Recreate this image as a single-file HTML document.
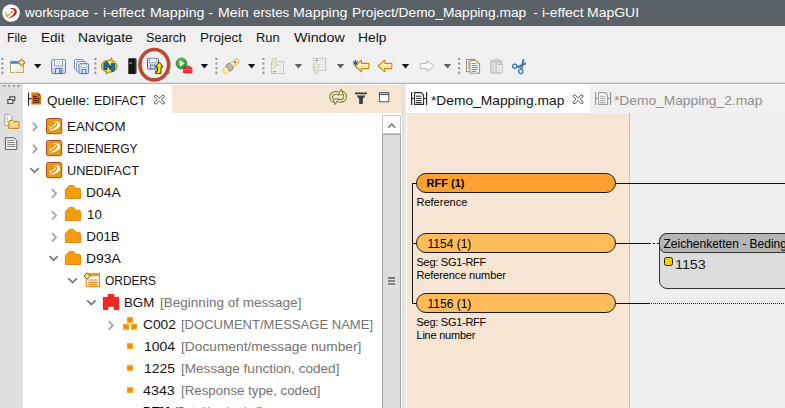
<!DOCTYPE html>
<html lang="de"><head><meta charset="utf-8"><title>i-effect MapGUI</title>
<style>
html,body{margin:0;padding:0;background:#f0f0f0;overflow:hidden;}
#app{position:relative;width:785px;height:408px;overflow:hidden;background:#f0f0f0;font-family:"Liberation Sans",sans-serif;}
#app div,#app svg,#app span{position:absolute;}
.t{white-space:nowrap;line-height:1;transform-origin:0 0;display:block;margin-left:-0.6px;}
.a{white-space:nowrap;line-height:1;display:block;color:#000;}
#title{left:0;top:0;width:785px;height:25.5px;background:#5a6268;}
#tbline{left:0;top:82px;width:785px;height:2px;background:linear-gradient(#dedede 0 50%,#b6b6b6 50% 100%);}
#side{left:0;top:84px;width:23px;height:324px;background:#e0e0e0;}
#ltabbar{left:23px;top:85px;width:378.6px;height:28px;background:#f5e5d2;border-top-right-radius:4px;}
#ltab{left:23px;top:84px;width:149px;height:29px;background:#fff;border-top-right-radius:5px;}
#tree{left:23px;top:113px;width:359px;height:295px;background:#fff;}
#sbar{left:382px;top:113px;width:20.4px;height:295px;background:#fff;}
#sbup{left:382px;top:115px;width:16.6px;height:17px;background:#fff;border:1px solid #c9c9c9;}
#sbthumb{left:382px;top:134px;width:16.6px;height:280px;background:#dddddd;border:1px solid #a3a3a3;}
#sash{left:402.4px;top:84px;width:3.6px;height:324px;background:linear-gradient(90deg,#dcdcdc,#ebebeb);}
#etab{left:406px;top:84px;width:184px;height:29px;background:#fff;border-top-right-radius:5px;}
#eleft{left:406px;top:113px;width:1px;height:295px;background:#fff;}
#epeach{left:407px;top:113px;width:222px;height:295px;background:#f5e5d2;border-right:1px solid #c6c0b8;}
#eright{left:630px;top:113px;width:155px;height:295px;background:#eeeeee;}
.pill{height:18px;width:198px;border:1px solid #1c1c1c;border-radius:10px;}
.ln{background:#111;}
#wl1{left:23px;top:84px;width:377px;height:1px;background:#fff;}
#wl2{left:406px;top:84px;width:379px;height:1px;background:#fdfdfd;}

</style></head><body>
<div id="app">
<div id="title"></div>
<svg style="left:0;top:0" width="24" height="26" viewBox="0 0 24 26">
 <circle cx="11.05" cy="13.05" r="8.8" fill="#fff"/>
 <path d="M9.4 8.7 C13 7.3 16.8 8.5 16.8 11.7 C16.8 15.1 12 18.1 7.6 18.5 C11.6 16.7 14.5 14 14.5 11.5 C14.5 9.5 12.4 8.7 9.4 8.7Z" fill="#b81e12"/>
 <path d="M5 12.1 L6.4 12.7 L7.3 15.5 L11.3 11.9 L10.3 11.1 L13 10.9 L12.7 13.5 L12 12.6 L6.6 17.8 Z" fill="#f0900c"/>
</svg>
<div id="tbline"></div>
<div id="side"></div>
<div id="wl1"></div><div id="wl2"></div>
<div id="ltabbar"></div>
<div id="ltab"></div>
<div id="tree"></div>
<div id="sbar"></div>
<div id="sbup"></div>
<div id="sbthumb"></div>
<div id="sash"></div>
<div id="etab"></div>
<div id="eleft"></div>
<div id="epeach"></div>
<div id="eright"></div>
<!-- editor diagram -->
<div class="ln" style="left:412px;top:183px;width:1px;height:121px"></div>
<div class="ln" style="left:412px;top:183px;width:5px;height:1px"></div>
<div class="ln" style="left:412px;top:243px;width:5px;height:1px"></div>
<div class="ln" style="left:412px;top:303px;width:5px;height:1px"></div>
<div class="pill" style="left:416px;top:173px;background:#ffa030"></div>
<div class="pill" style="left:416px;top:233px;background:#ffbc58"></div>
<div class="pill" style="left:416px;top:293px;background:#ffbc58"></div>
<span class="a" style="left:426.6px;top:178.3px;font-size:11px;font-weight:bold">RFF (1)</span>
<span class="a" style="left:427.5px;top:238px;font-size:12px">1154 (1)</span>
<span class="a" style="left:427.5px;top:298px;font-size:12px">1156 (1)</span>
<span class="a" style="left:416.5px;top:196.6px;font-size:11px">Reference</span>
<span class="a" style="left:416.5px;top:256.6px;font-size:11px;letter-spacing:-0.27px">Seg: SG1-RFF</span>
<span class="a" style="left:416.5px;top:269.8px;font-size:11px;letter-spacing:-0.12px">Reference number</span>
<span class="a" style="left:416.5px;top:316.8px;font-size:11px;letter-spacing:-0.27px">Seg: SG1-RFF</span>
<span class="a" style="left:416.5px;top:329.9px;font-size:11px;letter-spacing:-0.23px">Line number</span>
<div class="ln" style="left:616px;top:183px;width:169px;height:1px"></div>
<div class="ln" style="left:616px;top:243px;width:33px;height:1px"></div>
<div style="left:649px;top:243px;width:11px;height:1px;background:repeating-linear-gradient(90deg,#111 0 2px,transparent 2px 4px)"></div>
<div class="ln" style="left:616px;top:303px;width:33px;height:1px"></div>
<div style="left:649px;top:303px;width:136px;height:1px;background:repeating-linear-gradient(90deg,#222 0 1px,transparent 1px 2px)"></div>
<div style="left:659px;top:233px;width:140px;height:54px;background:#dcdcdc;border:1px solid #333;border-radius:8px;"></div>
<div style="left:659px;top:233px;width:140px;height:18.4px;background:#b4b4b4;border:1px solid #333;border-radius:8px 8px 0 7px;"></div>
<span class="a" style="left:663.5px;top:238.1px;font-size:12px">Zeichenketten - Bedingung</span>
<div style="left:664.2px;top:257px;width:7px;height:7.4px;background:#ffcc00;border:1px solid #2a2200;border-radius:2.5px"></div>
<!-- scrollbar glyphs -->
<svg style="left:382px;top:115px" width="20" height="20" viewBox="0 0 20 20"><path d="M6.2 12.6 L9.7 9 L13.2 12.6" fill="none" stroke="#555" stroke-width="1.2"/></svg>
<svg style="left:386px;top:275px" width="12" height="12" viewBox="386 275 12 12"><path d="M388 277.9h7M388 281h7M388 284h7" stroke="#6a6a6a" stroke-width="1.7"/></svg>

<svg id="icons" style="left:0;top:0" width="785" height="408" viewBox="0 0 785 408">
<defs>
 <linearGradient id="gSave" x1="0" y1="0" x2="0" y2="1"><stop offset="0" stop-color="#f4f6fa"/><stop offset="1" stop-color="#c3d0e8"/></linearGradient>
 <linearGradient id="gArr" x1="0" y1="0" x2="0" y2="1"><stop offset="0" stop-color="#fffbe0"/><stop offset="1" stop-color="#ffd970"/></linearGradient>
 <linearGradient id="gBeige" x1="0" y1="0" x2="1" y2="0"><stop offset="0" stop-color="#f4f1e8"/><stop offset="1" stop-color="#dcd7c8"/></linearGradient>
 <radialGradient id="gGreen" cx="0.4" cy="0.35" r="0.7"><stop offset="0" stop-color="#6cc86c"/><stop offset="1" stop-color="#1f8a2a"/></radialGradient>
        </defs>
<!-- toolbar separators -->
<g transform="translate(1.4 58)"><rect x="0" y="0" width="2" height="2" fill="#979080"/><rect x="0" y="4.6" width="2" height="2" fill="#979080"/><rect x="0" y="9.2" width="2" height="2" fill="#979080"/><rect x="0" y="13.6" width="2" height="2.6" fill="#a39b88"/></g><g transform="translate(94.4 58)"><rect x="0" y="0" width="2" height="2" fill="#979080"/><rect x="0" y="4.6" width="2" height="2" fill="#979080"/><rect x="0" y="9.2" width="2" height="2" fill="#979080"/><rect x="0" y="13.6" width="2" height="2.6" fill="#a39b88"/></g><g transform="translate(215.4 58)"><rect x="0" y="0" width="2" height="2" fill="#979080"/><rect x="0" y="4.6" width="2" height="2" fill="#979080"/><rect x="0" y="9.2" width="2" height="2" fill="#979080"/><rect x="0" y="13.6" width="2" height="2.6" fill="#a39b88"/></g><g transform="translate(262.4 58)"><rect x="0" y="0" width="2" height="2" fill="#979080"/><rect x="0" y="4.6" width="2" height="2" fill="#979080"/><rect x="0" y="9.2" width="2" height="2" fill="#979080"/><rect x="0" y="13.6" width="2" height="2.6" fill="#a39b88"/></g><g transform="translate(458.2 58)"><rect x="0" y="0" width="2" height="2" fill="#979080"/><rect x="0" y="4.6" width="2" height="2" fill="#979080"/><rect x="0" y="9.2" width="2" height="2" fill="#979080"/><rect x="0" y="13.6" width="2" height="2.6" fill="#a39b88"/></g>
<!-- new -->
<rect x="10.5" y="61.5" width="13" height="11" fill="#f2faff" stroke="#b9a468" stroke-width="1"/>
<rect x="10.6" y="61.2" width="9" height="2.6" fill="#3b8bd4"/>
<path d="M13.5 72 C18.5 72 21.5 69.5 22.5 65.5" fill="none" stroke="#f8e6a8" stroke-width="1.4"/>
<path d="M21.6 59.4L24.6 62.5L21.6 65.6L18.6 62.5Z" fill="#fffdf0" stroke="#bf9a34" stroke-width="1.9" stroke-linejoin="round"/>
<path d="M21.6 60.6v3.8M19.7 62.5h3.8" stroke="#fff" stroke-width="1.2"/>
<g transform="translate(34 63.9)" fill="#111"><path d="M0 0h7.4l-3.7 4.5z"/></g>
<!-- save -->
<g id="save1"><rect x="51.6" y="59.5" width="14" height="14" rx="1.6" fill="url(#gSave)" stroke="#6f86b4" stroke-width="1"/>
<rect x="54.6" y="59.6" width="8" height="6.2" fill="#f8f9f6" stroke="#8c99ab" stroke-width=".8"/><path d="M56 61.8h5.2M56 63.6h5.2" stroke="#cfd4da" stroke-width=".7"/>
<rect x="55.6" y="68.6" width="6.2" height="5" fill="#dfe9fa" stroke="#4c6eaf" stroke-width="1"/><rect x="59.2" y="69.6" width="1.3" height="3.4" fill="#39558f"/></g>
<!-- save all -->
<rect x="74.4" y="59.5" width="9" height="10" rx="1.2" fill="#eef2fa" stroke="#7a8fb8" stroke-width="1"/>
<rect x="76.6" y="61.5" width="9.4" height="10.4" rx="1.2" fill="#eef2fa" stroke="#7a8fb8" stroke-width="1"/>
<rect x="79" y="63.6" width="9.6" height="10" rx="1.2" fill="url(#gSave)" stroke="#5d7db6" stroke-width="1"/>
<rect x="81" y="64" width="5.6" height="3.6" fill="#f4f6f6" stroke="#94a1b5" stroke-width=".7"/>
<rect x="82" y="69.6" width="3.8" height="4" fill="#dfe9fa" stroke="#4c6eaf" stroke-width=".9"/>
<!-- sync -->
<path d="M101.6 66.6C101.2 63 103.8 60.6 107.6 60.4L110.2 60.2L111.6 57.8L112.2 60.8C115 61.6 117 63.6 117 66.4C117 69.4 114.8 71.6 111.6 72L108.4 72.2L106.4 74.2L106.6 71.8C103.8 71.2 101.9 69.4 101.6 66.6Z" fill="#ffe232" stroke="#857a1a" stroke-width="1"/>
<path d="M103.9 69.2V63.4L106.6 61.4L111.7 67.6V63.2L114.7 63.8V69.6L112 71.6L106.9 65.4V69.8Z" fill="#1a74c6" stroke="#15150c" stroke-width=".7" stroke-linejoin="round"/>
<!-- server -->
<path d="M128.3 59.2C128.3 58.6 128.8 58.3 129.4 58.3H135.2C136 58.3 136.5 58.8 136.5 59.6V72.6C136.5 73.4 136 73.9 135.2 73.9H128.3Z" fill="#141414"/>
<rect x="134.4" y="59" width="1.6" height="14" fill="#3a3a3a" opacity=".7"/>
<rect x="129.2" y="62.6" width="2.8" height="1.3" fill="#21d23a"/>
<!-- highlight ellipse -->
<ellipse cx="154.3" cy="64.7" rx="14.4" ry="15.2" fill="none" stroke="#bd4a31" stroke-width="3.7"/>
<!-- save as / upload -->
<rect x="147.5" y="58.4" width="11" height="10.6" rx="1" fill="#dbe2ec" stroke="#586070" stroke-width="1"/>
<rect x="149.6" y="58.6" width="6.6" height="4.2" fill="#f1f3f4" stroke="#8a93a0" stroke-width=".7"/>
<rect x="150.4" y="65" width="4.6" height="4" fill="#c9d8f2" stroke="#4f68a0" stroke-width=".8"/>
<path d="M159.2 62L163 66.8H161V73.4H155.6V71.2H157.6V66.8H155.4Z" fill="#fff000" stroke="#15150a" stroke-width=".9" stroke-linejoin="round"/>
<rect x="168.4" y="72.2" width="1.2" height="2" fill="#6a6a60"/>
<!-- run -->
<circle cx="181.5" cy="63.5" r="5.5" fill="url(#gGreen)" stroke="#2b8a35" stroke-width=".6"/>
<path d="M179.8 60.6L184.6 63.5L179.8 66.4Z" fill="#fff"/>
<path d="M185.6 67.2V66.2H189.6V67.2" fill="none" stroke="#e01818" stroke-width="1.1"/>
<rect x="183" y="67.2" width="9.4" height="6" rx=".8" fill="#e31b1b"/>
<path d="M183.4 69.6h8.6" stroke="#ffb8b8" stroke-width=".7"/><path d="M183.4 71.6h8.6" stroke="#f06060" stroke-width=".6"/>
<g transform="translate(200.7 63.9)" fill="#111"><path d="M0 0h7.4l-3.7 4.5z"/></g>
<!-- flashlight -->
<g transform="translate(231 65.9) rotate(-40.5) scale(0.89 1)">
 <path d="M-10.8 -2.2L-4.6 -3V3L-10.8 2.2Z" fill="#fffbe2" stroke="#f0a52a" stroke-width=".9"/>
 <path d="M-10.6 -1.9L-7.6 -2.3V2.3L-10.6 1.9Z" fill="#fff36a"/>
 <path d="M-4.8 -3.2L-1.6 -3.8L1.4 -2.5V2.5L-1.6 3.8L-4.8 3.2Z" fill="#b9b2bb" stroke="#9a7040" stroke-width=".8"/>
 <path d="M1.4 -2.5H8.8L10.6 -0.8V0.8L8.8 2.5H1.4Z" fill="#ffe9a6" stroke="#f0a52a" stroke-width=".9"/>
 <rect x="4.8" y="-0.8" width="2.6" height="1.4" fill="#2a56b0"/>
</g>
<g transform="translate(247.9 63.9)" fill="#111"><path d="M0 0h7.4l-3.7 4.5z"/></g>
<!-- next annotation (disabled) -->
<rect x="271.6" y="61.6" width="12" height="12" fill="#f6f6f6" stroke="#c2c2c2" stroke-width="1"/>
<path d="M279.6 63.6h2M279.6 65.6h2M278.6 67.6h3M277 69.6h1.6M279.6 69.6h2M277 71.6h4.6" stroke="#d4d6d8" stroke-width=".8"/>
<rect x="273.2" y="71" width="2.8" height="1.4" fill="#7f95ab"/>
<path d="M272.8 58.4H276.4V64.6H279L274.6 69.4L270.2 64.6H272.8Z" fill="url(#gBeige)" stroke="#cfcabb" stroke-width=".8"/>
<g transform="translate(294.8 63.9)" fill="#606164"><path d="M0 0h7.4l-3.7 4.5z"/></g>
<!-- prev annotation (disabled) -->
<rect x="313.6" y="58.4" width="12" height="12" fill="#f6f6f6" stroke="#c2c2c2" stroke-width="1"/>
<path d="M319.2 60.4h4.6M319.2 62.4h1.8M322.2 62.4h1.6M321 64.4h2.8M322 66.4h1.8M322 68.4h1.8" stroke="#d4d6d8" stroke-width=".8"/>
<rect x="315.2" y="59.8" width="2.8" height="1.4" fill="#7f95ab"/>
<path d="M316.5 62.2L320.9 67H318.3V73.6H314.7V67H312.1Z" fill="url(#gBeige)" stroke="#cfcabb" stroke-width=".8"/>
<g transform="translate(336.8 63.9)" fill="#606164"><path d="M0 0h7.4l-3.7 4.5z"/></g>
<!-- last edit location -->
<path d="M355 66L361.4 60.2V63.4H368.8V68.6H361.4V71.8Z" fill="url(#gArr)" stroke="#c58d12" stroke-width="1.1" stroke-linejoin="round"/>
<path d="M355.4 59.8v6.2M353 61.4l4.8 3M357.8 61.4l-4.8 3" stroke="#1f4fa2" stroke-width="1.1"/>
<!-- back -->
<path d="M378.2 66L384.8 60.2V63.4H391.8V68.6H384.8V71.8Z" fill="url(#gArr)" stroke="#c58d12" stroke-width="1.1" stroke-linejoin="round"/>
<g transform="translate(401.8 63.9)" fill="#111"><path d="M0 0h7.4l-3.7 4.5z"/></g>
<!-- forward disabled -->
<path d="M433.8 66L427.2 60.4V63.4H420.4V68.6H427.2V71.6Z" fill="#fafafa" stroke="#bababa" stroke-width="1" stroke-linejoin="round"/>
<g transform="translate(443.8 63.9)" fill="#606164"><path d="M0 0h7.4l-3.7 4.5z"/></g>
<!-- copy -->
<rect x="466.5" y="59.4" width="8" height="12.2" fill="#eaf2fb" stroke="#a38c5c" stroke-width="1"/>
<path d="M468 62h2.6M468 64h2.6M468 66h2.6M468 68h2.6" stroke="#5b8fd0" stroke-width=".9"/>
<path d="M469.9 60.6H476.6L479.6 63.6V73.2H469.9Z" fill="#fdfeff" stroke="#a38c5c" stroke-width="1"/>
<path d="M476.6 60.6V63.6H479.6Z" fill="#f5d36a" stroke="#b59a50" stroke-width=".6"/>
<path d="M471.6 63.6h4M471.6 65.6h6.2M471.6 67.6h6.2M471.6 69.6h6.2M471.6 71.4h4.6" stroke="#4a82c6" stroke-width=".9"/>
<!-- paste disabled -->
<rect x="490.8" y="60.6" width="10.8" height="12.6" rx="1" fill="#dadada" stroke="#b4b4b4" stroke-width="1"/>
<rect x="494" y="59.2" width="4.6" height="2.6" rx=".8" fill="#cfcfcf" stroke="#b2b2b2" stroke-width=".7"/>
<rect x="496.2" y="64.8" width="6.2" height="8" fill="#f3f3f3" stroke="#bcbcbc" stroke-width=".8"/>
<path d="M497.6 67.2h3M497.6 69.2h3M497.6 71h3" stroke="#c9c9c9" stroke-width=".7"/>
<!-- scissors -->
<path d="M516.4 66.4L525.8 62.2L526.2 64.2L518.6 68.2Z" fill="#56749f"/>
<path d="M520 69.4L522.6 59L524.6 59.6L522.2 70.2Z" fill="#56749f"/>
<circle cx="514.7" cy="66.2" r="2.1" fill="#f4f8fc" stroke="#2878c8" stroke-width="1.3"/>
<circle cx="520.8" cy="71.5" r="2.1" fill="#f4f8fc" stroke="#2878c8" stroke-width="1.3"/>
<!-- left side bar -->
<g fill="#aaa598"><rect x="3.2" y="85" width="2.4" height="2"/><rect x="8" y="85" width="2" height="2"/><rect x="13" y="85" width="2" height="2"/><rect x="17.2" y="85" width="2.6" height="2"/></g>
<rect x="9.8" y="96.8" width="5" height="3.8" fill="#e4e4e4" stroke="#555" stroke-width="1.2"/>
<rect x="7.8" y="99.6" width="5" height="3.8" fill="#f4f4f4" stroke="#555" stroke-width="1.2"/>
<path d="M4.8 114.4H9.6L12 116.8V125.6H4.8Z" fill="#fbfbfb" stroke="#9a9a90" stroke-width=".9"/>
<path d="M6.4 117h1.4M6.4 119.2h1.4M6.4 121.4h1.4" stroke="#5a8ad0" stroke-width=".9"/>
<path d="M8.8 128.4V121.4C8.8 120.8 9.2 120.4 9.8 120.4H12.6L13.6 121.6H18C18.6 121.6 19 122 19 122.6V128.4Z" fill="#ffd978" stroke="#b97f24" stroke-width="1"/>
<path d="M5.4 137.8H14L16.8 140.4V149.4H5.4Z" fill="#fff" stroke="#555" stroke-width="1"/>
<path d="M7.2 140.6h6.6M7.2 142.6h7.8M7.2 144.6h7.8M7.2 146.6h7.8" stroke="#666" stroke-width=".9"/>
<!-- left tab icon -->
<path d="M28.6 92.4V105.8M28.6 98.6h3" stroke="#222" stroke-width="1.1"/>
<path d="M31.4 92.6H38L41 95.4V104.6H31.4Z" fill="#e9700a"/>
<path d="M38 92.6V95.4H41Z" fill="#7a3a08"/>
<path d="M33 96.4h4M33 98.4h6.4M33 100.4h6.4M33 102.4h6.4" stroke="#3c1c04" stroke-width="1"/>
<!-- close X left tab -->
<g transform="translate(154.4 95.2)"><path d="M0 0.6L1.8 0L4.9 3.1L8 0L9.8 0.6L9.8 1.8L6.8 4.4L9.8 7L9.8 8.4L8 8.8L4.9 5.8L1.8 8.8L0 8.4L0 7L3 4.4L0 1.8Z" fill="#fdfdfd" stroke="#5a5a5a" stroke-width="1" stroke-linejoin="round"/></g><g transform="translate(573.2 94.8)"><path d="M0 0.6L1.8 0L4.9 3.1L8 0L9.8 0.6L9.8 1.8L6.8 4.4L9.8 7L9.8 8.4L8 8.8L4.9 5.8L1.8 8.8L0 8.4L0 7L3 4.4L0 1.8Z" fill="#fdfdfd" stroke="#5a5a5a" stroke-width="1" stroke-linejoin="round"/></g>
<!-- left view toolbar -->
<g fill="none" stroke-linecap="butt">
 <path d="M339.2 93.4 C335 91.6 331 94 331.2 97.4 C331.4 100 333.6 101.6 336 101.4" stroke="#7d7d24" stroke-width="3.6"/>
 <path d="M337.4 100.4 C341.6 102.2 345.4 99.8 345.2 96.4 C345 93.8 342.8 92.2 340.4 92.4" stroke="#7d7d24" stroke-width="3.6"/>
 <path d="M339.2 93.4 C335 91.6 331 94 331.2 97.4 C331.4 100 333.6 101.6 336 101.4" stroke="#fbf8f0" stroke-width="1.5"/>
 <path d="M337.4 100.4 C341.6 102.2 345.4 99.8 345.2 96.4 C345 93.8 342.8 92.2 340.4 92.4" stroke="#fbf8f0" stroke-width="1.5"/>
</g>
<path d="M338.6 98.6L335 104.6L333.4 99.4Z" fill="#fbf8f0" stroke="#7d7d24" stroke-width="1"/>
<path d="M338 95.2L341.4 89.2L343.2 94.4Z" fill="#fbf8f0" stroke="#7d7d24" stroke-width="1"/>
<path d="M355 92.6H367V94.2H355Z M356.4 95.6H365.6L362.8 99V104H359.2V99Z" fill="#3e3e3e"/>
<rect x="379.4" y="92.6" width="9.4" height="9.2" fill="#fff" stroke="#555" stroke-width="1"/><path d="M379.4 94.4h9.6" stroke="#555" stroke-width="1.4"/>
<!-- editor tab icons -->
<g transform="translate(411 92)" color="#2a2a2a"><path d="M0.6 0v13M15.6 0v13M0.6 6.5h3M12.6 6.5h3" stroke="currentColor" stroke-width="1.2" fill="none"/><path d="M3.6 0.6h6.6l2.4 2.4v9.4h-9z" fill="#fff" stroke="currentColor" stroke-width="1.1"/><path d="M5 4.2h5.6M5 6.4h5.6M5 8.6h5.6M5 10.6h5.6" stroke="currentColor" stroke-width="1"/></g>
<g transform="translate(595 92)" color="#9a9a9a"><path d="M0.6 0v13M15.6 0v13M0.6 6.5h3M12.6 6.5h3" stroke="currentColor" stroke-width="1.2" fill="none"/><path d="M3.6 0.6h6.6l2.4 2.4v9.4h-9z" fill="#fff" stroke="currentColor" stroke-width="1.1"/><path d="M5 4.2h5.6M5 6.4h5.6M5 8.6h5.6M5 10.6h5.6" stroke="currentColor" stroke-width="1"/></g>
<!-- tree icons -->
<g transform="translate(32.4 122.6)"><path d="M0.4 0l4 4.2l-4 4.2" fill="none" stroke="#a8a8a8" stroke-width="1.9"/></g><g transform="translate(46 118)"><rect x="0.5" y="0.5" width="15.2" height="15.2" rx="1.8" fill="#e39c14" stroke="#b2432d" stroke-width="1"/><path d="M6.8 3.9 C10.6 2.4 14.3 3.8 14 6.9 C13.6 10.2 8.4 12.9 3.2 12.6 C7.6 11.4 11.2 9 11.4 6.6 C11.6 4.6 9.6 3.7 6.8 3.9Z" fill="#fff"/><path d="M2.8 7.6 L3.8 7.8 L4.5 10 L8.6 6.3 L7.8 5.7 L10 5.4 L9.8 7.7 L9.2 7 L4 11.3Z" fill="#fff" opacity=".9"/></g>
<g transform="translate(32.4 144.6)"><path d="M0.4 0l4 4.2l-4 4.2" fill="none" stroke="#a8a8a8" stroke-width="1.9"/></g><g transform="translate(46 140)"><rect x="0.5" y="0.5" width="15.2" height="15.2" rx="1.8" fill="#e39c14" stroke="#b2432d" stroke-width="1"/><path d="M6.8 3.9 C10.6 2.4 14.3 3.8 14 6.9 C13.6 10.2 8.4 12.9 3.2 12.6 C7.6 11.4 11.2 9 11.4 6.6 C11.6 4.6 9.6 3.7 6.8 3.9Z" fill="#fff"/><path d="M2.8 7.6 L3.8 7.8 L4.5 10 L8.6 6.3 L7.8 5.7 L10 5.4 L9.8 7.7 L9.2 7 L4 11.3Z" fill="#fff" opacity=".9"/></g>
<g transform="translate(30.4 168.2)"><path d="M0 0l4.2 4l4.2 -4" fill="none" stroke="#7f7f7f" stroke-width="1.8"/></g><g transform="translate(46 162)"><rect x="0.5" y="0.5" width="15.2" height="15.2" rx="1.8" fill="#e39c14" stroke="#b2432d" stroke-width="1"/><path d="M6.8 3.9 C10.6 2.4 14.3 3.8 14 6.9 C13.6 10.2 8.4 12.9 3.2 12.6 C7.6 11.4 11.2 9 11.4 6.6 C11.6 4.6 9.6 3.7 6.8 3.9Z" fill="#fff"/><path d="M2.8 7.6 L3.8 7.8 L4.5 10 L8.6 6.3 L7.8 5.7 L10 5.4 L9.8 7.7 L9.2 7 L4 11.3Z" fill="#fff" opacity=".9"/></g>
<g transform="translate(51.6 189.2)"><path d="M0.4 0l4 4.2l-4 4.2" fill="none" stroke="#a8a8a8" stroke-width="1.9"/></g><g transform="translate(65 185)"><path d="M0.4 13.5V4.4L1.4 3.7L4.3 0.4H8.8L11 3.4H14.8L15.7 4.4V13.5Z" fill="#f59c0b" stroke="#e2830a" stroke-width=".9" stroke-linejoin="round"/></g>
<g transform="translate(51.6 211.2)"><path d="M0.4 0l4 4.2l-4 4.2" fill="none" stroke="#a8a8a8" stroke-width="1.9"/></g><g transform="translate(65 207)"><path d="M0.4 13.5V4.4L1.4 3.7L4.3 0.4H8.8L11 3.4H14.8L15.7 4.4V13.5Z" fill="#f59c0b" stroke="#e2830a" stroke-width=".9" stroke-linejoin="round"/></g>
<g transform="translate(51.6 233.2)"><path d="M0.4 0l4 4.2l-4 4.2" fill="none" stroke="#a8a8a8" stroke-width="1.9"/></g><g transform="translate(65 229)"><path d="M0.4 13.5V4.4L1.4 3.7L4.3 0.4H8.8L11 3.4H14.8L15.7 4.4V13.5Z" fill="#f59c0b" stroke="#e2830a" stroke-width=".9" stroke-linejoin="round"/></g>
<g transform="translate(49.4 256.2)"><path d="M0 0l4.2 4l4.2 -4" fill="none" stroke="#7f7f7f" stroke-width="1.8"/></g><g transform="translate(65 251)"><path d="M0.4 13.5V4.4L1.4 3.7L4.3 0.4H8.8L11 3.4H14.8L15.7 4.4V13.5Z" fill="#f59c0b" stroke="#e2830a" stroke-width=".9" stroke-linejoin="round"/></g>
<g transform="translate(68.4 278.4)"><path d="M0 0l4.2 4l4.2 -4" fill="none" stroke="#7f7f7f" stroke-width="1.8"/></g>
<rect x="86.2" y="273.5" width="13.4" height="13" fill="#eaf6fc" stroke="#f08a14" stroke-width="1.1"/>
<rect x="86.2" y="273.5" width="13.4" height="2.6" fill="#f59a1e"/>
<path d="M88.4 280h9M88.4 282.4h9M88.4 284.6h9" stroke="#f08a14" stroke-width="1.1"/>
<path d="M87.2 272.8L90.4 276L87.2 279.2L84 276Z" fill="#ffe83a" stroke="#4a4210" stroke-width=".8"/>
<g transform="translate(87.2 300.4)"><path d="M0 0l4.2 4l4.2 -4" fill="none" stroke="#7f7f7f" stroke-width="1.8"/></g>
<path d="M108.2 294.4H113.8V297.4H118.6V309.4H114.2V306.2H107.8V309.4H103.4V297.4H108.2Z" fill="#ff2525" stroke="#d91616" stroke-width=".9"/>
<g transform="translate(108.4 321.2)"><path d="M0.4 0l4 4.2l-4 4.2" fill="none" stroke="#a8a8a8" stroke-width="1.9"/></g>
<g transform="translate(127 317)"><rect x="0" y="0" width="6" height="6" fill="#ffa51a"/><rect x="1.5" y="1.5" width="3" height="3" fill="#e8820a"/></g><g transform="translate(123 323.8)"><rect x="0" y="0" width="6" height="6" fill="#ffa51a"/><rect x="1.5" y="1.5" width="3" height="3" fill="#e8820a"/></g><g transform="translate(131 323.8)"><rect x="0" y="0" width="6" height="6" fill="#ffa51a"/><rect x="1.5" y="1.5" width="3" height="3" fill="#e8820a"/></g>
<g transform="translate(127 343)"><rect x="0" y="0" width="6" height="6" fill="#ffa51a"/><rect x="1.5" y="1.5" width="3" height="3" fill="#e8820a"/></g><g transform="translate(127 365)"><rect x="0" y="0" width="6" height="6" fill="#ffa51a"/><rect x="1.5" y="1.5" width="3" height="3" fill="#e8820a"/></g><g transform="translate(127 387)"><rect x="0" y="0" width="6" height="6" fill="#ffa51a"/><rect x="1.5" y="1.5" width="3" height="3" fill="#e8820a"/></g>
</svg>


<span class="t" id="t0" style="left:25.60px;top:6.40px;font-size:13.7px;color:#fff;font-weight:normal;transform:scaleX(0.9792)">workspace</span>
<span class="t" id="t1" style="left:94.30px;top:6.40px;font-size:13.7px;color:#fff;font-weight:normal;transform:scaleX(1.0000)">-</span>
<span class="t" id="t2" style="left:103.20px;top:6.40px;font-size:13.7px;color:#fff;font-weight:normal;transform:scaleX(1.0240)">i-effect</span>
<span class="t" id="t3" style="left:150.30px;top:6.40px;font-size:13.7px;color:#fff;font-weight:normal;transform:scaleX(1.0385)">Mapping</span>
<span class="t" id="t4" style="left:208.90px;top:6.40px;font-size:13.7px;color:#fff;font-weight:normal;transform:scaleX(1.0000)">-</span>
<span class="t" id="t5" style="left:218.30px;top:6.40px;font-size:13.7px;color:#fff;font-weight:normal;transform:scaleX(1.0324)">Mein</span>
<span class="t" id="t6" style="left:253.50px;top:6.40px;font-size:13.7px;color:#fff;font-weight:normal;transform:scaleX(0.9702)">erstes</span>
<span class="t" id="t7" style="left:293.80px;top:6.40px;font-size:13.7px;color:#fff;font-weight:normal;transform:scaleX(1.0385)">Mapping</span>
<span class="t" id="t8" style="left:352.90px;top:6.40px;font-size:13.7px;color:#fff;font-weight:normal;transform:scaleX(1.0042)">Project/Demo_Mapping.map</span>
<span class="t" id="t9" style="left:533.80px;top:6.40px;font-size:13.7px;color:#fff;font-weight:normal;transform:scaleX(1.0000)">-</span>
<span class="t" id="t10" style="left:542.20px;top:6.40px;font-size:13.7px;color:#fff;font-weight:normal;transform:scaleX(1.0215)">i-effect</span>
<span class="t" id="t11" style="left:587.50px;top:6.40px;font-size:13.7px;color:#fff;font-weight:normal;transform:scaleX(1.0206)">MapGUI</span>
<span class="t" id="t12" style="left:7.60px;top:30.76px;font-size:13.4px;color:#141414;font-weight:normal;transform:scaleX(0.9233)">File</span>
<span class="t" id="t13" style="left:41.40px;top:30.76px;font-size:13.4px;color:#141414;font-weight:normal;transform:scaleX(1.0146)">Edit</span>
<span class="t" id="t14" style="left:78.40px;top:30.76px;font-size:13.4px;color:#141414;font-weight:normal;transform:scaleX(1.0374)">Navigate</span>
<span class="t" id="t15" style="left:146.40px;top:30.76px;font-size:13.4px;color:#141414;font-weight:normal;transform:scaleX(0.9436)">Search</span>
<span class="t" id="t16" style="left:200.60px;top:30.76px;font-size:13.4px;color:#141414;font-weight:normal;transform:scaleX(1.0101)">Project</span>
<span class="t" id="t17" style="left:256.70px;top:30.76px;font-size:13.4px;color:#141414;font-weight:normal;transform:scaleX(0.9628)">Run</span>
<span class="t" id="t18" style="left:294.40px;top:30.76px;font-size:13.4px;color:#141414;font-weight:normal;transform:scaleX(1.0656)">Window</span>
<span class="t" id="t19" style="left:358.70px;top:30.76px;font-size:13.4px;color:#141414;font-weight:normal;transform:scaleX(1.0321)">Help</span>
<span class="t" id="t20" style="left:47.60px;top:93.86px;font-size:13.4px;color:#141414;font-weight:normal;transform:scaleX(1.0039)">Quelle:</span>
<span class="t" id="t21" style="left:94.80px;top:93.86px;font-size:13.4px;color:#141414;font-weight:normal;transform:scaleX(0.9145)">EDIFACT</span>
<span class="t" id="t22" style="left:67.80px;top:119.96px;font-size:13.4px;color:#141414;font-weight:normal;transform:scaleX(0.9951)">EANCOM</span>
<span class="t" id="t23" style="left:67.80px;top:141.96px;font-size:13.4px;color:#141414;font-weight:normal;transform:scaleX(0.8925)">EDIENERGY</span>
<span class="t" id="t24" style="left:67.80px;top:163.96px;font-size:13.4px;color:#141414;font-weight:normal;transform:scaleX(0.9480)">UNEDIFACT</span>
<span class="t" id="t25" style="left:86.90px;top:185.96px;font-size:13.4px;color:#141414;font-weight:normal;transform:scaleX(1.0338)">D04A</span>
<span class="t" id="t26" style="left:87.60px;top:207.96px;font-size:13.4px;color:#141414;font-weight:normal;transform:scaleX(0.9924)">10</span>
<span class="t" id="t27" style="left:86.90px;top:229.96px;font-size:13.4px;color:#141414;font-weight:normal;transform:scaleX(1.0000)">D01B</span>
<span class="t" id="t28" style="left:86.90px;top:251.96px;font-size:13.4px;color:#141414;font-weight:normal;transform:scaleX(1.0338)">D93A</span>
<span class="t" id="t29" style="left:105.20px;top:273.96px;font-size:13.4px;color:#141414;font-weight:normal;transform:scaleX(0.8917)">ORDERS</span>
<span class="t" id="t30" style="left:125.00px;top:295.96px;font-size:13.4px;color:#141414;font-weight:normal;transform:scaleX(0.9927)">BGM</span>
<span class="t" id="t31" style="left:160.20px;top:295.96px;font-size:13.4px;color:#737373;font-weight:normal;transform:scaleX(1.0104)">[Beginning of message]</span>
<span class="t" id="t32" style="left:143.30px;top:317.96px;font-size:13.4px;color:#141414;font-weight:normal;transform:scaleX(1.0285)">C002</span>
<span class="t" id="t33" style="left:181.20px;top:317.96px;font-size:13.4px;color:#737373;font-weight:normal;transform:scaleX(0.9741)">[DOCUMENT/MESSAGE NAME]</span>
<span class="t" id="t34" style="left:144.30px;top:339.96px;font-size:13.4px;color:#141414;font-weight:normal;transform:scaleX(1.0418)">1004</span>
<span class="t" id="t35" style="left:181.20px;top:339.96px;font-size:13.4px;color:#737373;font-weight:normal;transform:scaleX(1.0266)">[Document/message number]</span>
<span class="t" id="t36" style="left:144.30px;top:361.96px;font-size:13.4px;color:#141414;font-weight:normal;transform:scaleX(1.0418)">1225</span>
<span class="t" id="t37" style="left:181.20px;top:361.96px;font-size:13.4px;color:#737373;font-weight:normal;transform:scaleX(1.0133)">[Message function, coded]</span>
<span class="t" id="t38" style="left:143.60px;top:383.96px;font-size:13.4px;color:#141414;font-weight:normal;transform:scaleX(1.0661)">4343</span>
<span class="t" id="t39" style="left:181.20px;top:383.96px;font-size:13.4px;color:#737373;font-weight:normal;transform:scaleX(0.9907)">[Response type, coded]</span>
<span class="t" id="t40" style="left:144.00px;top:404.56px;font-size:13.4px;color:#000;font-weight:bold;transform:scaleX(0.9281)">DTM</span>
<span class="t" id="t41" style="left:176.00px;top:404.56px;font-size:13.4px;color:#737373;font-weight:normal;transform:scaleX(0.8215)">[Date/time/period]</span>
<span class="t" id="t42" style="left:431.60px;top:93.96px;font-size:13.4px;color:#141414;font-weight:normal;transform:scaleX(1.0294)">*Demo_Mapping.map</span>
<span class="t" id="t43" style="left:614.90px;top:93.96px;font-size:13.4px;color:#8e8e8e;font-weight:normal;transform:scaleX(1.0277)">*Demo_Mapping_2.map</span>
<span class="t" id="t44" style="left:675.80px;top:257.66px;font-size:13.4px;color:#1a1a1a;font-weight:normal;transform:scaleX(1.0685)">1153</span>
</div>
</body></html>
